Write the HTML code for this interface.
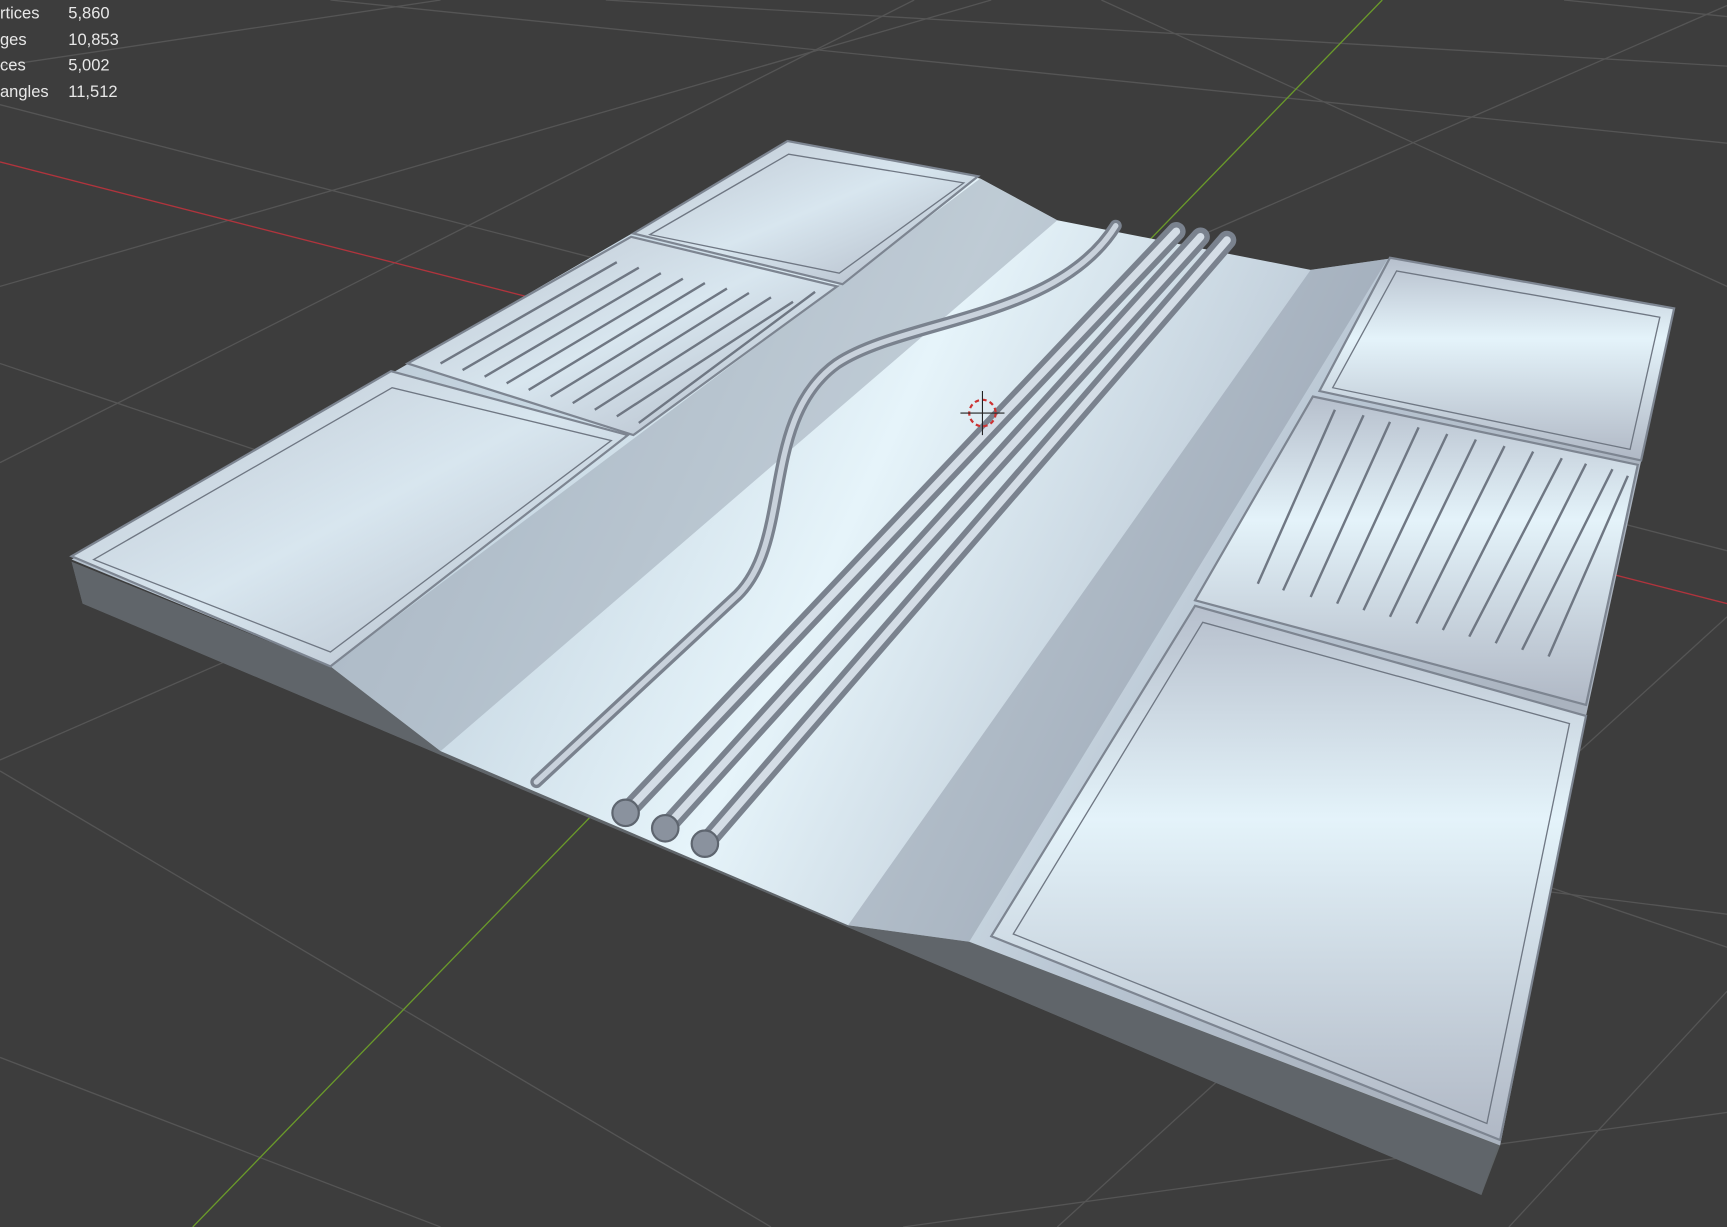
<!DOCTYPE html>
<html><head><meta charset="utf-8"><style>
html,body{margin:0;padding:0;background:#3d3d3d;overflow:hidden}
svg{display:block}
.t{font-family:"Liberation Sans",sans-serif;font-size:15px;fill:#e8e8e8}
</style></head><body>
<svg width="1727" height="1227" viewBox="0 0 1568 1114" xmlns="http://www.w3.org/2000/svg">
<defs>
<linearGradient id="ch" x1="0" y1="0" x2="1" y2="0.3">
<stop offset="0" stop-color="#a9b3c0"/><stop offset="0.35" stop-color="#c9d9e4"/><stop offset="0.55" stop-color="#e6f4fa"/><stop offset="0.8" stop-color="#b9c6d3"/><stop offset="1" stop-color="#aab3bf"/></linearGradient>
<linearGradient id="pn" x1="0" y1="0" x2="1" y2="1">
<stop offset="0" stop-color="#bcc5d0"/><stop offset="0.5" stop-color="#d8e6ef"/><stop offset="1" stop-color="#aeb6c3"/></linearGradient>
<linearGradient id="pr" x1="0" y1="0" x2="0" y2="1">
<stop offset="0" stop-color="#b6bfcc"/><stop offset="0.4" stop-color="#e4f3fa"/><stop offset="1" stop-color="#b0b8c5"/></linearGradient>
</defs>
<rect width="1568" height="1114" fill="#3d3d3d"/>
<g stroke="#555" stroke-width="1.2" fill="none">
<path d="M0 95 L1568 500"/><path d="M0 330 L1568 860"/><path d="M0 700 L700 1114"/><path d="M300 0 L1568 130"/><path d="M550 0 L1568 60"/>
<path d="M0 60 L400 0"/><path d="M0 260 L900 0"/><path d="M0 690 L1568 5"/><path d="M960 1114 L1568 560"/>
<path d="M1370 1114 L1568 900"/><path d="M830 0 L0 420"/><path d="M0 960 L400 1114"/><path d="M1420 0 L1568 15"/>
<path d="M1568 260 L1000 0"/><path d="M820 1114 L1568 1010"/><path d="M1568 830 L1330 800"/>
</g>
<path d="M0 147 L1568 548" stroke="#b0343d" stroke-width="1.2"/>
<path d="M175 1114 L1255 0" stroke="#6a9a2a" stroke-width="1.2"/>
<!-- side face -->
<path d="M65 510 L75 548 L1345 1085 L1362 1040 Z" fill="#5f6466"/>
<path d="M65 510 L300 605 L400 682 L770 840 L880 855 L1360 1040 L1345 1085 L75 548 Z" fill="#60656a"/>
<!-- top surface -->
<path d="M65 508 L718 128 L890 162 L960 200 L1190 245 L1260 235 L1520 280 L1440 650 L1362 1040 L880 855 L770 840 L400 682 L300 605 Z" fill="url(#ch)"/>
<path d="M890 162 L960 200 L400 682 L300 605 Z" fill="#9fa9b7" opacity="0.55"/>
<path d="M1190 245 L1260 235 L880 855 L770 840 Z" fill="#8f9aa8" opacity="0.5"/>
<!-- panels -->
<g stroke="#7d8591" stroke-width="2">
<path d="M575 212 L715 128 L888 160 L765 258 Z" fill="url(#pn)"/>
<path d="M370 330 L573 215 L760 260 L575 395 Z" fill="url(#pn)"/>
<path d="M65 505 L355 337 L570 395 L300 605 Z" fill="url(#pn)"/>
<path d="M1198 355 L1262 234 L1520 280 L1490 418 Z" fill="url(#pr)"/>
<path d="M1085 545 L1192 360 L1487 422 L1440 640 Z" fill="url(#pr)"/>
<path d="M900 850 L1085 550 L1440 650 L1362 1035 Z" fill="url(#pr)"/>
</g>
<g stroke="#6f7783" stroke-width="1.2" fill="none">
<path d="M85 508 L356 352 L555 400 L300 592 Z"/>
<path d="M920 848 L1092 565 L1425 657 L1350 1020 Z"/>
<path d="M590 213 L716 140 L875 166 L762 248 Z"/>
<path d="M1210 352 L1268 246 L1507 288 L1480 408 Z"/>
</g>
<g stroke="#6f7783" stroke-width="2.2">
<path d="M400 330 L560 238"/><path d="M420 336 L580 243"/><path d="M440 342 L600 248"/><path d="M460 348 L620 253"/><path d="M480 354 L640 257"/><path d="M500 360 L660 262"/><path d="M520 366 L680 266"/><path d="M540 372 L700 270"/><path d="M560 378 L720 274"/><path d="M580 384 L740 265"/>
<path d="M1142 530 L1212 372"/><path d="M1165 536 L1238 377"/><path d="M1190 542 L1262 383"/><path d="M1214 548 L1288 388"/><path d="M1238 554 L1314 394"/><path d="M1262 560 L1340 399"/><path d="M1286 566 L1366 405"/><path d="M1310 572 L1392 410"/><path d="M1334 578 L1418 416"/><path d="M1358 584 L1440 421"/><path d="M1382 590 L1464 426"/><path d="M1406 596 L1478 432"/>
</g>
<!-- pipes -->
<g fill="none" stroke-linecap="round">
<path d="M487 710 L670 540 C720 490 690 380 760 330 C820 290 960 290 1013 205" stroke="#7a828e" stroke-width="11"/>
<path d="M487 710 L670 540 C720 490 690 380 760 330 C820 290 960 290 1013 205" stroke="#c9d2dc" stroke-width="5"/>
<path d="M568 738 L1068 210" stroke="#7a828e" stroke-width="17"/><path d="M568 738 L1068 210" stroke="#d4dde6" stroke-width="7"/>
<path d="M604 752 L1090 215" stroke="#7a828e" stroke-width="17"/><path d="M604 752 L1090 215" stroke="#d4dde6" stroke-width="7"/>
<path d="M640 766 L1114 218" stroke="#7a828e" stroke-width="17"/><path d="M640 766 L1114 218" stroke="#d4dde6" stroke-width="7"/>
</g>
<g fill="#8a929e" stroke="#5e656f" stroke-width="2"><circle cx="568" cy="738" r="12"/><circle cx="604" cy="752" r="12"/><circle cx="640" cy="766" r="12"/></g>
<circle cx="892" cy="375" r="12" fill="none" stroke="#c33" stroke-width="2" stroke-dasharray="4 3"/>
<path d="M892 355 V395 M872 375 H912" stroke="#222" stroke-width="1"/>
<text class="t" x="0" y="17">rtices</text><text class="t" x="62" y="17">5,860</text>
<text class="t" x="0" y="41">ges</text><text class="t" x="62" y="41">10,853</text>
<text class="t" x="0" y="64">ces</text><text class="t" x="62" y="64">5,002</text>
<text class="t" x="0" y="88">angles</text><text class="t" x="62" y="88">11,512</text>
</svg>
</body></html>
